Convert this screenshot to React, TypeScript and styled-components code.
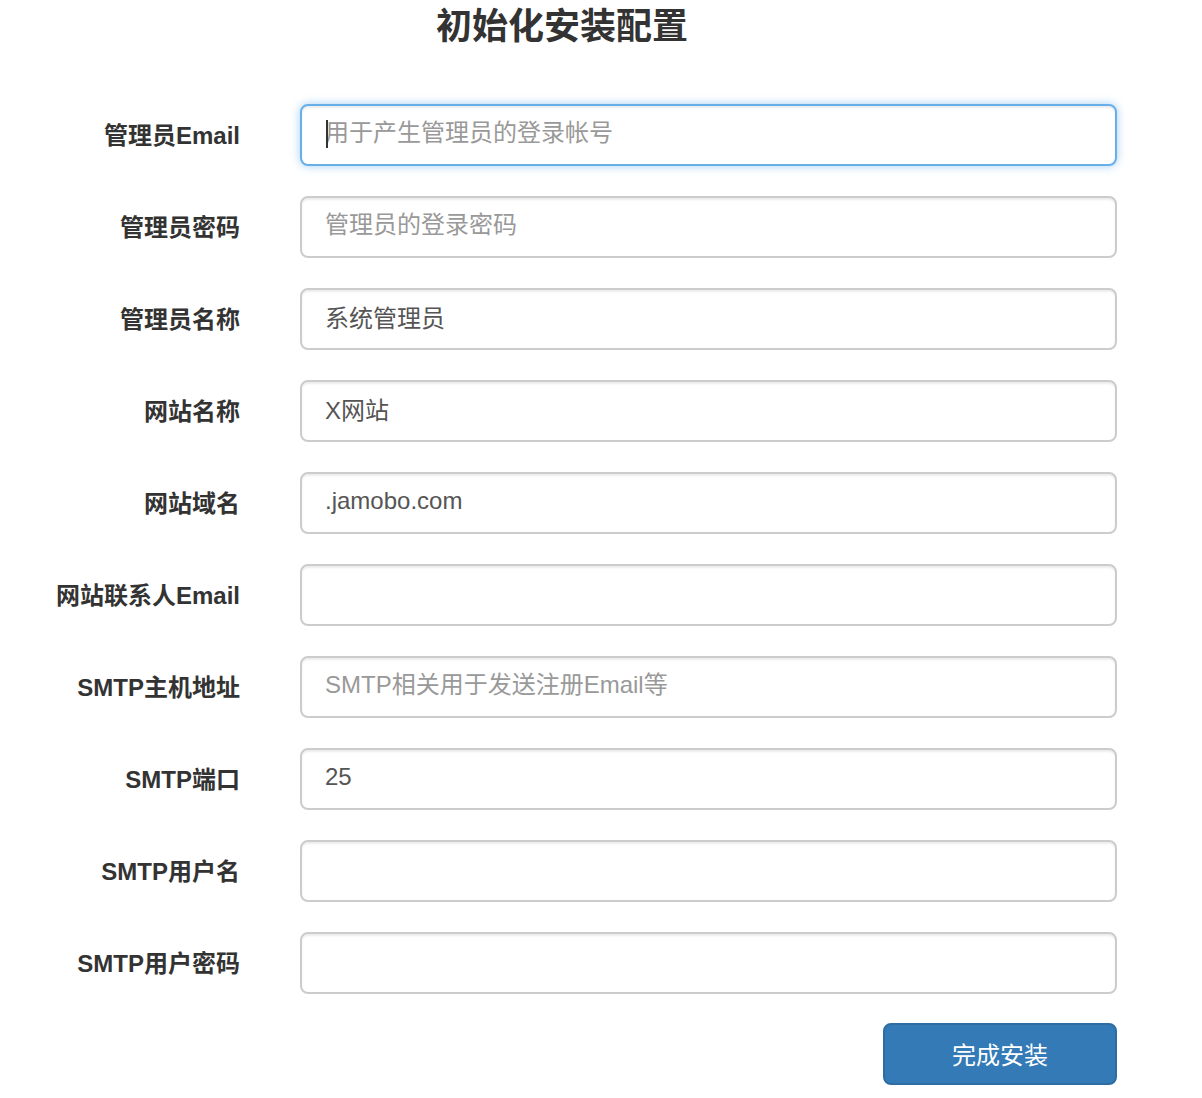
import styled, { createGlobalStyle } from "styled-components"

const GlobalStyle = createGlobalStyle`
body {
  margin: 0;
  background: #fff;
  font-family: "Liberation Sans", "Noto Sans CJK SC", sans-serif;
  color: #333;
}
`

const Page = styled.div`
width: 1124px;
`

const Titulo = styled.h1`
margin: 7px 0 0;
height: 40px;
line-height: 40px;
font-size: 36px;
font-weight: 700;
text-align: center;
color: #333;
`

const Form = styled.form`
display: grid;
grid-template-columns: 240px 817px;
column-gap: 60px;
row-gap: 30px;
margin-top: 57px;
align-items: center;
`

const Label = styled.label`
text-align: right;
font-size: 24px;
font-weight: 700;
color: #333;
line-height: 30px;
padding-top: 1px;
`

const Campo = styled.div`
position: relative;
`

const Input = styled.input<{ $focused?: boolean }>`
box-sizing: border-box;
display: block;
width: 100%;
height: 62px;
padding: 0 23px 5px;
font-family: "Liberation Sans", "Noto Sans CJK SC", sans-serif;
font-size: 24px;
color: #555;
background: #fff;
border: 2px solid ${(p) => (p.$focused ? "#66afe9" : "#ccc")};
border-radius: 8px;
outline: none;
box-shadow: ${(p) =>
  p.$focused
    ? "inset 0 2px 2px rgba(0,0,0,.075), 0 0 10px rgba(102,175,233,.6)"
    : "inset 0 2px 2px rgba(0,0,0,.075)"};

&::placeholder {
  color: #999;
}
`

const Cursor = styled.span`
position: absolute;
left: 26px;
top: 16px;
width: 2px;
height: 28px;
background: #333;
`

const Acoes = styled.div`
grid-column: 2;
display: flex;
justify-content: flex-end;
margin-top: -1px;
`

const Botao = styled.button`
width: 234px;
height: 62px;
padding: 0 0 2px;
font-family: "Liberation Sans", "Noto Sans CJK SC", sans-serif;
font-size: 24px;
color: #fff;
background: #337ab7;
border: 2px solid #2e6da4;
border-radius: 8px;
`

const campos = [
  { label: "管理员Email", placeholder: "用于产生管理员的登录帐号", focused: true },
  { label: "管理员密码", placeholder: "管理员的登录密码" },
  { label: "管理员名称", value: "系统管理员" },
  { label: "网站名称", value: "X网站" },
  { label: "网站域名", value: ".jamobo.com" },
  { label: "网站联系人Email" },
  { label: "SMTP主机地址", placeholder: "SMTP相关用于发送注册Email等" },
  { label: "SMTP端口", value: "25" },
  { label: "SMTP用户名" },
  { label: "SMTP用户密码" },
]

export default function App() {
  return (
    <Page>
      <GlobalStyle />
      <Titulo>初始化安装配置</Titulo>
      <Form onSubmit={(e) => e.preventDefault()}>
        {campos.map((c) => (
          <>
            <Label key={c.label + "-l"}>{c.label}</Label>
            <Campo key={c.label + "-c"}>
              <Input
                $focused={c.focused}
                placeholder={c.placeholder}
                defaultValue={c.value}
              />
              {c.focused && <Cursor />}
            </Campo>
          </>
        ))}
        <Acoes>
          <Botao type="submit">完成安装</Botao>
        </Acoes>
      </Form>
    </Page>
  )
}
